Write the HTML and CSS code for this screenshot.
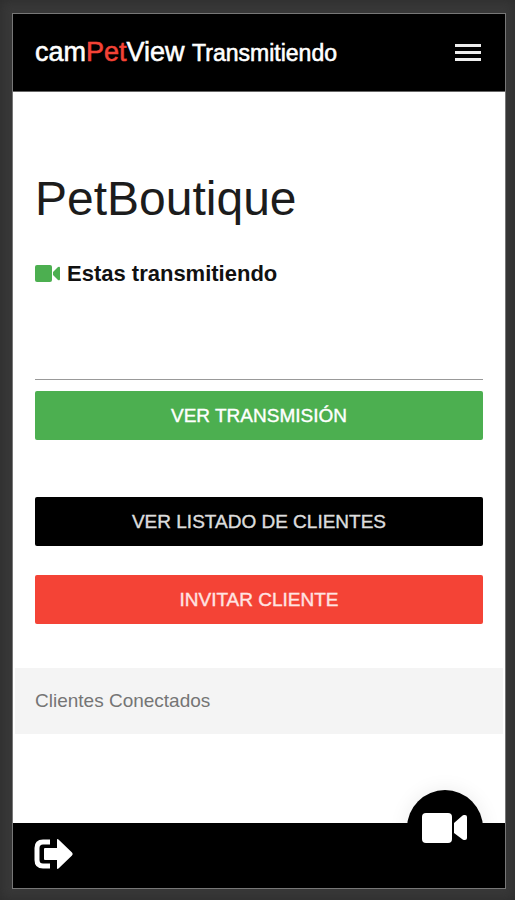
FILE: index.html
```html
<!DOCTYPE html>
<html lang="es">
<head>
<meta charset="utf-8">
<meta name="viewport" content="width=device-width, initial-scale=1">
<title>camPetView</title>
<link rel="stylesheet" href="styles.css">
</head>
<body>
<div class="app">
  <header class="topbar">
    <div class="brand">cam<span class="brand-accent">Pet</span>View <span class="brand-status">Transmitiendo</span></div>
    <button class="icon-button" type="button" aria-label="Menú">
      <svg width="26" height="18" viewBox="0 0 26 18" fill="#eee"><path d="M0 0h26v3H0zM0 7h26v3H0zM0 14h26v3H0z"/></svg>
    </button>
  </header>
  <main class="content">
    <h1 class="title">PetBoutique</h1>
    <p class="status">
      <svg width="26" height="18" viewBox="0 0 26 18" fill="#4caf50"><rect width="17" height="17" y="0" rx="2"/><path d="M18 7 23 2Q25 1 25 3V14Q25 16 23 15L18 10z"/></svg>
      Estas transmitiendo
    </p>
    <hr class="rule">
    <div class="actions">
      <button class="button button-green" type="button">VER TRANSMISIÓN</button>
      <button class="button button-black" type="button">VER LISTADO DE CLIENTES</button>
      <button class="button button-red" type="button">INVITAR CLIENTE</button>
    </div>
  </main>
  <h2 class="section-title">Clientes Conectados</h2>
  <footer class="bottombar">
    <button class="icon-button" type="button" aria-label="Salir">
      <svg width="40" height="32" viewBox="0 0 40 32"><path d="M16 4H9Q3 4 3 10V22Q3 28 9 28H16" fill="none" stroke="#fff" stroke-width="5"/><path d="M11 10H23V2Q23 0 25 2L38 14.500Q39.500 16 38 17.500L25 30Q23 32 23 30V22H11Q10 22 10 21V11Q10 10 11 10z" fill="#fff"/></svg>
    </button>
    <button class="camera-button" type="button" aria-label="Cámara">
      <svg width="46" height="30" viewBox="0 0 46 30" fill="#fff"><rect width="30" height="30" rx="4"/><path d="M32 10 40 3Q41 2 42 2H43Q45 2 45 4V25Q45 27 43 27H42Q41 27 40 26L32 20z"/></svg>
    </button>
  </footer>
</div>
</body>
</html>
```
FILE: styles.css
```css
* {
  box-sizing: border-box;
}

body {
  margin: 0;
  min-height: 100vh;
  padding: 13px 9px 11px 12px;
  display: flex;
  background: #383838;
  box-shadow: inset 0 0 12px #2c2c2c;
  font-family: "Liberation Sans", Arial, sans-serif;
}

.app {
  flex: 1;
  display: flex;
  flex-direction: column;
  border: 1px solid #777;
  background: #fff;
}

.topbar {
  display: flex;
  align-items: center;
  justify-content: space-between;
  height: 78px;
  padding: 0 24px 0 22px;
  border-bottom: 1px solid #666;
  background: #000;
  color: #fff;
}

.brand {
  font-size: 27px;
  -webkit-text-stroke: thin currentColor;
}

.brand-accent {
  color: #f44336;
}

.brand-status {
  font-size: 23px;
}

.icon-button {
  display: flex;
  padding: 0;
  border: 0;
  background: none;
  cursor: pointer;
}

.content {
  padding: 77px 22px 44px;
}

.title {
  margin: 0;
  color: #1c1c1c;
  font-size: 48px;
  font-weight: 400;
  line-height: 60px;
}

.status {
  display: flex;
  align-items: center;
  gap: 6px;
  margin: 32px 0 92px;
  color: #111;
  font-size: 22px;
  font-weight: 700;
  line-height: 26px;
}

.rule {
  margin: 0 0 11px;
  border: 0;
  border-top: 1px solid #999;
}

.actions {
  display: flex;
  flex-direction: column;
}

.button {
  height: 49px;
  padding: 0;
  border: 0;
  border-radius: 2px;
  color: #fff;
  font-family: inherit;
  font-size: 19px;
  -webkit-text-stroke: thin currentColor;
  cursor: pointer;
}

.button-green {
  margin-bottom: 57px;
  background: #4caf50;
}

.button-black {
  margin-bottom: 29px;
  background: #000;
  color: #ddd;
}

.button-red {
  background: #f44336;
  color: #ffe4e2;
}

.section-title {
  margin: 0 2px;
  padding: 0 20px;
  background: #f4f4f4;
  color: #757575;
  font-size: 19px;
  font-weight: 400;
  line-height: 66px;
}

.bottombar {
  position: relative;
  display: flex;
  align-items: center;
  height: 65px;
  margin-top: auto;
  padding: 0 21px 4px;
  background: #000;
}

.camera-button {
  position: absolute;
  right: 22px;
  bottom: 22px;
  display: flex;
  align-items: center;
  justify-content: center;
  width: 76px;
  height: 76px;
  padding: 0;
  border: 0;
  border-radius: 50%;
  background: #000;
  box-shadow: 0 0 20px rgba(0, 0, 0, 0.08);
  cursor: pointer;
}
```
